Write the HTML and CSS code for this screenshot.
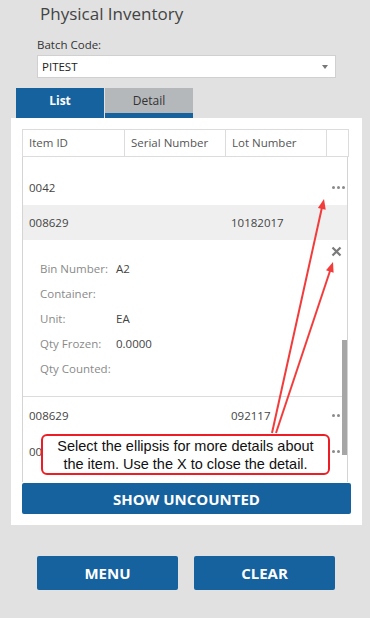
FILE: index.html
```html
<!DOCTYPE html>
<html lang="en">
<head>
    <meta charset="UTF-8">
    <meta name="viewport" content="width=device-width, initial-scale=1.0">
    <title>Physical Inventory</title>
    <link rel="stylesheet" href="styles.css">
</head>
<body>

    <h1 class="title">Physical Inventory</h1>

    <div class="field">
        <label>Batch Code:</label>
        <div class="select-box">
            <span>PITEST</span>
            <span class="caret"></span>
        </div>
    </div>

    <div class="tabs">
        <div class="tab active">List</div>
        <div class="tab">Detail</div>
    </div>

    <div class="panel">
        <div class="grid">
            <div class="grid-head">
                <div class="cell">Item ID</div>
                <div class="cell">Serial Number</div>
                <div class="cell">Lot Number</div>
                <div class="cell"></div>
            </div>
            <div class="grid-body">
                <div class="spacer"></div>
                <div class="row">
                    <div class="cell">0042</div>
                    <div class="cell"></div>
                    <div class="cell"></div>
                    <div class="cell more"><span></span><span></span><span></span></div>
                </div>
                <div class="row alt">
                    <div class="cell">008629</div>
                    <div class="cell"></div>
                    <div class="cell">10182017</div>
                    <div class="cell"></div>
                </div>
                <div class="detail">
                    <div class="close">
                        <svg width="11" height="11" viewBox="0 0 11 11"><path d="M1.5 1.5 L9.5 9.5 M9.5 1.5 L1.5 9.5" stroke="#7a7a7a" stroke-width="2.2"/></svg>
                    </div>
                    <div class="line"><span class="key">Bin Number:</span><span>A2</span></div>
                    <div class="line"><span class="key">Container:</span><span></span></div>
                    <div class="line"><span class="key">Unit:</span><span>EA</span></div>
                    <div class="line"><span class="key">Qty Frozen:</span><span>0.0000</span></div>
                    <div class="line"><span class="key">Qty Counted:</span><span></span></div>
                </div>
                <div class="row">
                    <div class="cell">008629</div>
                    <div class="cell"></div>
                    <div class="cell">092117</div>
                    <div class="cell more"><span></span><span></span><span></span></div>
                </div>
                <div class="row">
                    <div class="cell">00</div>
                    <div class="cell"></div>
                    <div class="cell"></div>
                    <div class="cell more"><span></span><span></span><span></span></div>
                </div>
                <div class="scrollbar"></div>
            </div>
        </div>
        <button class="btn wide">SHOW UNCOUNTED</button>
    </div>

    <div class="actions">
        <button class="btn">MENU</button>
        <button class="btn">CLEAR</button>
    </div>

    <!-- nota de ayuda sobre la pantalla -->
    <svg class="arrows" width="370" height="618" viewBox="0 0 370 618">
        <line x1="272" y1="433" x2="322.5" y2="205" stroke="#f23b3b" stroke-width="2"/>
        <polygon points="324,199 325.7,209.7 317.9,207.9" fill="#f23b3b"/>
        <line x1="276" y1="433" x2="331" y2="268" stroke="#f23b3b" stroke-width="2"/>
        <polygon points="333,262 333.6,272.8 326,270.2" fill="#f23b3b"/>
    </svg>
    <div class="callout">Select the ellipsis for more details about<br>the item. Use the X to close the detail.</div>

</body>
</html>
```

FILE: styles.css
```css
body {
    margin: 0;
    background-color: #e1e1e1;
    font-family: 'Open Sans', sans-serif;
    color: #444;
    position: relative;
    width: 370px;
    height: 618px;
    overflow: hidden;
}

.title {
    margin: 0;
    padding-left: 40px;
    font-size: 17px;
    font-weight: normal;
    line-height: 28px;
    color: #444;
}

.field {
    padding: 7px 34px 0 37px;
}

.field label {
    display: block;
    font-size: 11.5px;
    line-height: 20px;
    color: #333;
}

.select-box {
    display: flex;
    align-items: center;
    justify-content: space-between;
    height: 21px;
    background-color: #fff;
    border: 1px solid #d0d0d0;
    padding: 0 7px 0 4px;
    font-size: 11.5px;
    color: #222;
}

.caret {
    width: 0;
    height: 0;
    border-left: 3.5px solid transparent;
    border-right: 3.5px solid transparent;
    border-top: 4px solid #777;
}

.tabs {
    display: flex;
    margin: 10px 0 0 16px;
    gap: 1px;
}

.tab {
    width: 88px;
    height: 25px;
    line-height: 25px;
    text-align: center;
    font-size: 12px;
    color: #333;
    background-color: #b5b8bb;
    border-bottom: 5px solid #16629f;
}

.tab.active {
    background-color: #16629f;
    color: #fff;
    font-weight: bold;
}

.panel {
    margin: 0 8px 0 11px;
    background-color: #fff;
    padding: 11px 11px 11px 11px;
}

.grid {
    width: 327px;
}

.grid-head {
    display: grid;
    grid-template-columns: 102px 101px 101px 23px;
    height: 27px;
    border-top: 1px solid #dcdcdc;
}

.grid-head .cell {
    border-left: 1px solid #dcdcdc;
    border-bottom: 1px solid #dcdcdc;
    padding-left: 6px;
    font-size: 11.5px;
    line-height: 26px;
    color: #555;
}

.grid-head .cell:last-child {
    border-right: 1px solid #dcdcdc;
}

.grid-body {
    position: relative;
    height: 325px;
    overflow: hidden;
    border-left: 1px solid #d4d4d4;
    border-right: 1px solid #d4d4d4;
    margin-right: 1px;
}

.spacer {
    height: 12px;
}

.row {
    display: grid;
    grid-template-columns: 101px 101px 101px auto;
    height: 36px;
    align-items: center;
    font-size: 11.5px;
    color: #444;
}

.row.alt {
    background-color: #efefef;
    height: 35px;
}

.row .cell {
    padding-left: 6px;
}

.more {
    display: flex;
    gap: 2px;
    justify-content: flex-end;
    padding-right: 4px;
}

.more span {
    width: 3px;
    height: 3px;
    border-radius: 50%;
    background-color: #8a8a8a;
}

.detail {
    position: relative;
    padding: 16px 0 15px 17px;
    border-bottom: 1px solid #dcdcdc;
    font-size: 11.5px;
}

.close {
    position: absolute;
    top: 6px;
    right: 5px;
}

.close svg {
    display: block;
}

.line {
    display: flex;
    height: 25px;
    align-items: center;
}

.key {
    width: 76px;
    color: #8a8a8a;
}

.scrollbar {
    position: absolute;
    right: 0;
    top: 183px;
    width: 5px;
    height: 115px;
    background-color: #a6a6a6;
}

.btn {
    display: block;
    background-color: #16629f;
    color: #fff;
    border: none;
    border-radius: 2px;
    font-family: 'Open Sans', sans-serif;
    font-weight: bold;
    font-size: 15px;
    cursor: pointer;
}

.btn.wide {
    width: 329px;
    height: 31px;
    margin-top: 1px;
}

.actions {
    display: flex;
    gap: 16px;
    padding: 31px 0 0 37px;
}

.actions .btn {
    width: 141px;
    height: 34px;
}

.arrows {
    position: absolute;
    top: 0;
    left: 0;
    pointer-events: none;
}

.callout {
    position: absolute;
    left: 41px;
    top: 434px;
    width: 285px;
    height: 37px;
    border: 2px solid #ee1c24;
    border-radius: 6px;
    background-color: #fff;
    font-family: 'Liberation Sans', Arial, sans-serif;
    font-size: 14.5px;
    line-height: 18px;
    color: #111;
    text-align: center;
    display: flex;
    align-items: center;
    justify-content: center;
}
```
